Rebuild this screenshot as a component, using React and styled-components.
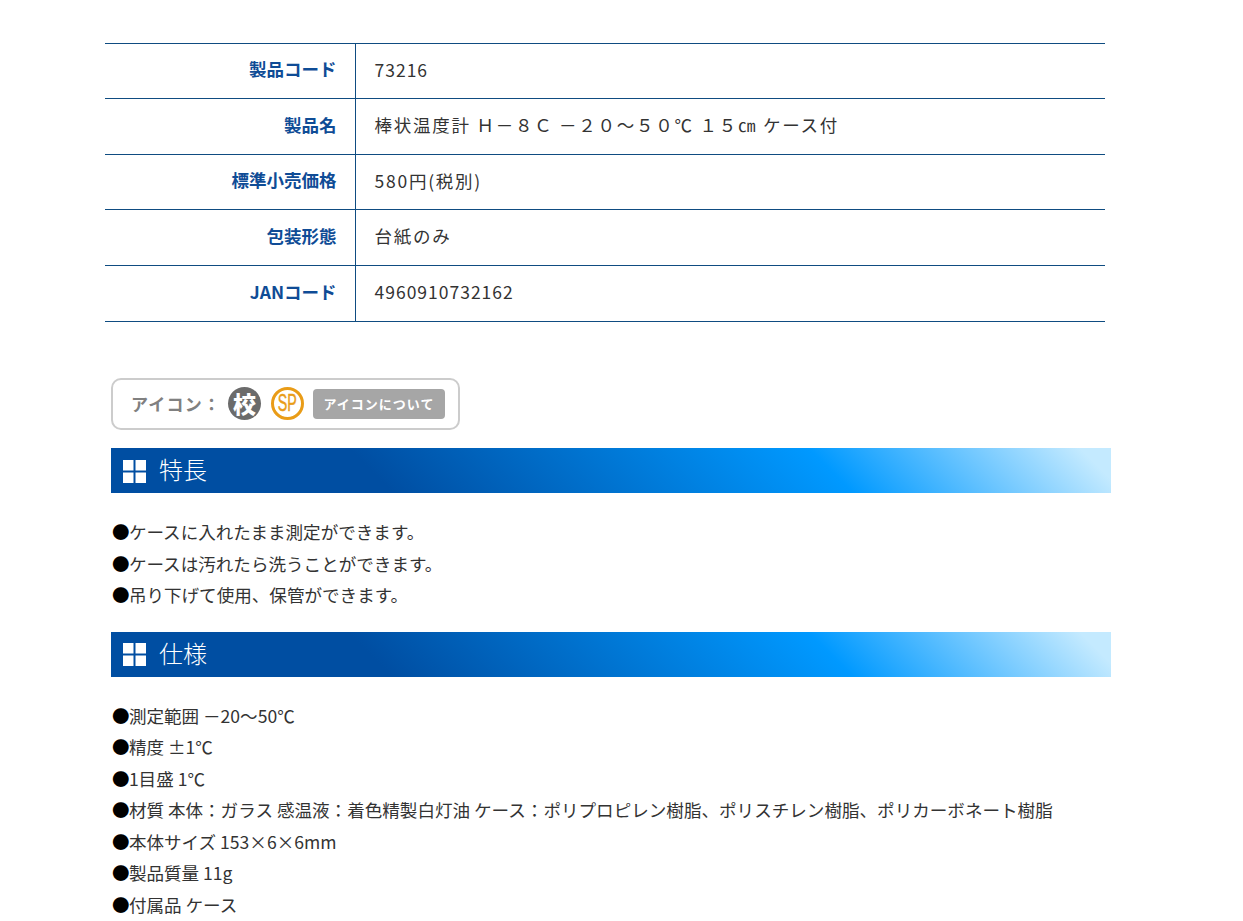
import styled, { createGlobalStyle } from "styled-components";

const specRows = [
  { label: "製品コード", value: "73216" },
  { label: "製品名", value: "棒状温度計 Ｈ－８Ｃ －２０～５０℃ １５㎝ ケース付", wide: true },
  { label: "標準小売価格", value: "580円(税別)", wide: true },
  { label: "包装形態", value: "台紙のみ", wide: true },
  { label: "JANコード", value: "4960910732162" },
];

const features = [
  "ケースに入れたまま測定ができます。",
  "ケースは汚れたら洗うことができます。",
  "吊り下げて使用、保管ができます。",
];

const specs = [
  "測定範囲 －20～50℃",
  "精度 ±1℃",
  "1目盛 1℃",
  "材質 本体：ガラス 感温液：着色精製白灯油 ケース：ポリプロピレン樹脂、ポリスチレン樹脂、ポリカーボネート樹脂",
  "本体サイズ 153×6×6mm",
  "製品質量 11g",
  "付属品 ケース",
];

function GridIcon() {
  return (
    <GridSvg width="23" height="23" viewBox="0 0 23 23">
      <rect x="0" y="0" width="10.5" height="10.5" fill="#fff" />
      <rect x="12.5" y="0" width="10.5" height="10.5" fill="#fff" />
      <rect x="0" y="12.5" width="10.5" height="10.5" fill="#fff" />
      <rect x="12.5" y="12.5" width="10.5" height="10.5" fill="#fff" />
    </GridSvg>
  );
}

export default function App() {
  return (
    <>
      <GlobalStyle />
      <Page>
        <SpecTable>
          <tbody>
            {specRows.map((row) => (
              <tr key={row.label}>
                <LabelCell>{row.label}</LabelCell>
                <ValueCell $wide={row.wide}>{row.value}</ValueCell>
              </tr>
            ))}
          </tbody>
        </SpecTable>

        <Content>
          <IconBox>
            <IconLabel>アイコン：</IconLabel>
            <RoundBadge>校</RoundBadge>
            <SpBadge>
              <span>SP</span>
            </SpBadge>
            <AboutButton>アイコンについて</AboutButton>
          </IconBox>

          <SectionTitle>
            <GridIcon />
            <span>特長</span>
          </SectionTitle>
          <BulletList>
            {features.map((item) => (
              <li key={item}>
                <Bullet>●</Bullet>
                {item}
              </li>
            ))}
          </BulletList>

          <SectionTitle>
            <GridIcon />
            <span>仕様</span>
          </SectionTitle>
          <BulletList>
            {specs.map((item) => (
              <li key={item}>
                <Bullet>●</Bullet>
                {item}
              </li>
            ))}
          </BulletList>
        </Content>
      </Page>
    </>
  );
}

const GlobalStyle = createGlobalStyle`
  html, body {
    margin: 0;
    padding: 0;
    background: #fff;
    height: 921px;
    overflow: hidden;
  }
  body {
    font-family: "Noto Sans CJK JP", "Noto Sans", sans-serif;
    color: #333;
  }
`;

const Page = styled.div`
  width: 1243px;
  padding-top: 43px;
`;

const SpecTable = styled.table`
  width: 1000px;
  margin-left: 105px;
  border-collapse: collapse;
  table-layout: fixed;
  border-top: 1px solid #0f4c81;

  tr {
    height: 56px;
    border-bottom: 1px solid #0f4c81;
  }
  tr:nth-child(1),
  tr:nth-child(3) {
    height: 55px;
  }
`;

const LabelCell = styled.th`
  width: 250px;
  box-sizing: border-box;
  padding: 0 18px 5px 0;
  text-align: right;
  font-size: 17.5px;
  font-weight: 700;
  color: #0f4c96;
  border-right: 1px solid #0f4c81;
`;

const ValueCell = styled.td`
  padding: 0 0 4px 19px;
  font-size: 17.5px;
  letter-spacing: ${(props) => (props.$wide ? "1.75px" : "1px")};
  color: #333;
`;

const Content = styled.div`
  width: 1000px;
  margin-left: 111px;
  padding-top: 56px;
`;

const IconBox = styled.div`
  display: flex;
  align-items: center;
  box-sizing: border-box;
  width: 349px;
  height: 52px;
  padding: 0 0 1px 18px;
  border: 2px solid #ccc;
  border-radius: 10px;
`;

const IconLabel = styled.span`
  width: 97px;
  font-size: 17px;
  font-weight: 700;
  letter-spacing: 1.2px;
  color: #808080;
`;

const RoundBadge = styled.span`
  display: flex;
  align-items: center;
  justify-content: center;
  width: 33px;
  height: 33px;
  border-radius: 50%;
  background: #6b6b6b;
  color: #fff;
  font-size: 23px;
  font-weight: 900;
  line-height: 1;
`;

const SpBadge = styled.span`
  display: flex;
  align-items: center;
  justify-content: center;
  box-sizing: border-box;
  width: 33px;
  height: 33px;
  margin-left: 10px;
  border-radius: 50%;
  border: 3px solid #e99c17;
  color: #e99c17;
  font-family: "Liberation Sans", sans-serif;
  font-size: 23px;
  line-height: 1;

  span {
    display: block;
    transform: scaleX(0.62);
    -webkit-text-stroke: 0.5px #e99c17;
  }
`;

const AboutButton = styled.span`
  display: flex;
  align-items: center;
  justify-content: center;
  width: 132px;
  height: 30px;
  margin-left: 9px;
  border-radius: 4px;
  background: #a6a6a6;
  color: #fff;
  font-size: 13px;
  font-weight: 700;
  letter-spacing: 1px;
`;

const SectionTitle = styled.h2`
  display: flex;
  align-items: center;
  gap: 13px;
  height: 45px;
  margin: 18px 0 0;
  padding: 0 0 4px 12px;
  box-sizing: border-box;
  background: linear-gradient(45deg, #004ea2 27%, #0099ff 71%, #c4eaff 97%);
  color: #fff;
  font-size: 24px;
  font-weight: 300;
`;

const GridSvg = styled.svg`
  margin-top: 5px;
`;

const BulletList = styled.ul`
  list-style: none;
  margin: 0 0 0 1px;
  padding: 23px 0 3px;
  font-size: 17.57px;
  line-height: 31.5px;
  color: #333;
`;

const Bullet = styled.span`
  color: #000;
  letter-spacing: -0.7px;
`;
